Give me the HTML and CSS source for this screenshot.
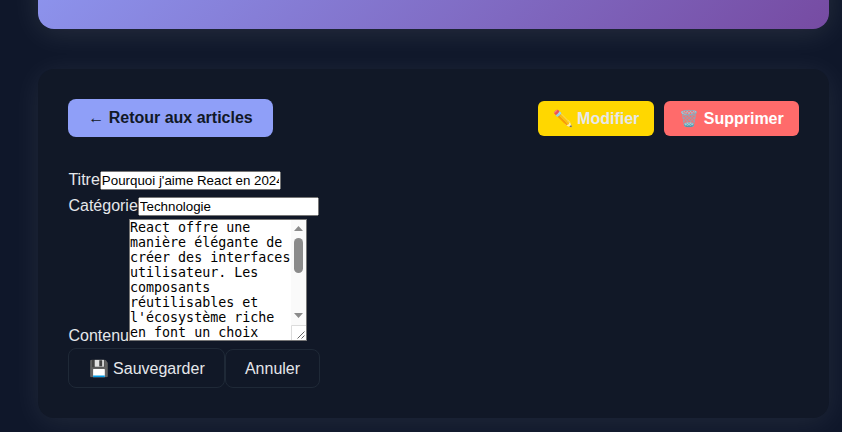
FILE: index.html
```html
<!DOCTYPE html>
<html lang="fr">
<head>
<meta charset="utf-8">
<title>Article</title>
<link rel="stylesheet" href="styles.css">
</head>
<body>
<header class="hero"></header>
<main class="card">
  <div class="toolbar">
    <button class="back" type="button">← Retour aux articles</button>
    <div class="actions">
      <button class="edit" type="button">✏️ Modifier</button>
      <button class="delete" type="button">🗑️ Supprimer</button>
    </div>
  </div>
  <form>
    <div class="field"><label for="t">Titre</label><input id="t" type="text" value="Pourquoi j'aime React en 2024"></div>
    <div class="field"><label for="c">Catégorie</label><input id="c" type="text" value="Technologie"></div>
    <div class="field area"><label for="b">Contenu</label><span class="box"><textarea id="b" rows="8">React offre une manière élégante de créer des interfaces utilisateur. Les composants réutilisables et l'écosystème riche en font un choix</textarea><svg class="scroll" width="15" height="120" viewBox="0 0 15 120" aria-hidden="true"><path fill="#fafafa" d="M0 0h15v120H0z"/><path fill="#8b8b8b" d="M3 11 7.500 6 12 11zM3 93 7.500 98 12 93z"/><rect x="3" y="18" width="9" height="35" rx="4.500" fill="#8b8b8b"/><path fill="#fff" stroke="#dcdcdc" d="M.5 121V105.500H16V121z"/><path fill="none" stroke="#555" stroke-width=".9" d="M6.500 118.500 13.500 111.500M10.500 118.500 13.500 115.500"/></svg></span></div>
    <div class="submit"><button class="plain save" type="button">💾 Sauvegarder</button><button class="plain" type="button">Annuler</button></div>
  </form>
</main>
</body>
</html>
```
FILE: styles.css
```css
* { box-sizing: border-box; }
html { height: 100%; overflow: hidden; background: #0f172a; }
body {
  margin: 0;
  height: 432px;
  overflow: hidden;
  padding: 0 13px 0 38px;
  background: #0f172a;
  color: #e5e7eb;
  font: 16px/26px "Liberation Sans", Arial, sans-serif;
}
.hero {
  height: 129px;
  margin-top: -100px;
  border-radius: 16px;
  background: linear-gradient(135deg, #8f9bf5 0%, #764ba2 100%);
  box-shadow: 0 4px 30px rgba(255, 255, 255, .1);
}
.card {
  height: 349px;
  margin-top: 40px;
  padding: 30px;
  border-radius: 16px;
  background: #111827;
  box-shadow: 0 4px 30px rgba(255, 255, 255, .08);
}
.toolbar { display: flex; justify-content: space-between; align-items: center; height: 38px; margin-bottom: 30px; }
.actions { display: flex; gap: 10px; }
button { font: 16px "Liberation Sans", Arial, sans-serif; border: 0; padding: 0; white-space: nowrap; }
.back { width: 205px; height: 38px; border-radius: 8px; background: #8f9ff8; color: #111827; font-weight: 700; }
.edit, .delete { height: 35px; border-radius: 6px; font-weight: 700; }
.edit { width: 116px; background: #ffd700; color: #e5e7eb; }
.delete { width: 135px; background: #ff6b6b; color: #fff; }
.field { padding-left: .45px; line-height: 25.6px; }
input, textarea { padding: 0; margin: 0; }
input { width: 181px; height: 19px; }
.area { display: flex; align-items: flex-end; height: 123px; }
.area label { height: 18px; }
.box { position: relative; width: 178px; height: 122px; }
textarea { display: block; width: 178px; height: 122px; padding-right: 15px; overflow: hidden; resize: none; border: 1px solid #767676; }
.scroll { position: absolute; top: 1px; right: 1px; }
.submit { display: flex; align-items: flex-end; margin-top: 7px; }
.plain { width: 95px; height: 39px; border: 1px solid #1f2937; border-radius: 8px; background: transparent; color: #e5e7eb; }
.save { width: 157px; height: 40px; padding-left: .4px; }
```
